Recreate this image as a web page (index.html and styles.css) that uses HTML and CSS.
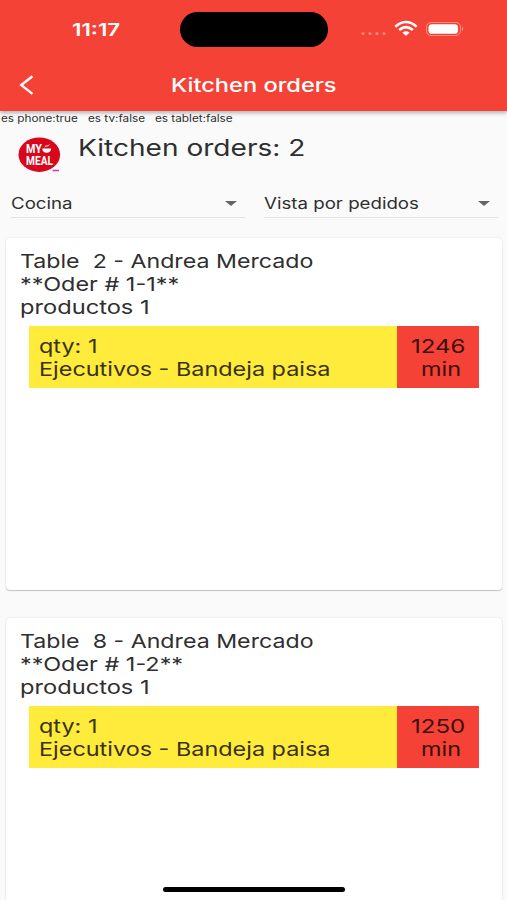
FILE: index.html
```html
<!DOCTYPE html>
<html lang="es">
<head>
<meta charset="utf-8">
<title>Kitchen orders</title>
<link rel="stylesheet" href="styles.css">
</head>
<body>
<header class="top">
  <div class="status">
    <div class="clock"><span class="wide">11:17</span></div>
    <div class="island"></div>
    <svg class="indicators" viewBox="0 0 110 24" width="110" height="24" aria-hidden="true">
      <g fill="#ff8378"><circle cx="3" cy="15.5" r="1.6"/><circle cx="10" cy="15.5" r="1.6"/><circle cx="17" cy="15.5" r="1.6"/><circle cx="24" cy="15.5" r="1.6"/></g>
      <g fill="none" stroke="#fff" stroke-width="2.5"><path d="M35.3 8.7Q46-.6 56.7 8.7"/><path d="M39.1 12Q46 6.2 52.9 12"/></g>
      <path d="M42.4 14.7Q46 11.9 49.6 14.7L46 17.8Z" fill="#fff"/>
      <rect x="66.5" y="4.5" width="34" height="13" rx="4.5" fill="none" stroke="#ff8f85"/>
      <rect x="68.5" y="6.2" width="29.5" height="9.6" rx="3.4" fill="#fff"/>
      <path d="M102 8.8Q104.3 11 102 13.2Z" fill="#ff9d94"/>
    </svg>
  </div>
  <div class="bar">
    <svg class="back" viewBox="0 0 16 22" width="16" height="22" aria-hidden="true"><path d="M13.5 2.3L2.3 11.1L13.5 19.9" fill="none" stroke="#fff" stroke-width="2.4"/></svg>
    <h1 class="title"><span class="wide">Kitchen orders</span></h1>
  </div>
</header>
<main class="page">
  <div class="debug">
    <div class="flag phone"><span class="wide">es phone:true</span></div>
    <div class="flag tv"><span class="wide">es tv:false</span></div>
    <div class="flag"><span class="wide">es tablet:false</span></div>
  </div>
  <div class="heading">
    <svg class="logo" viewBox="0 0 44 36" width="44" height="36" aria-hidden="true">
      <ellipse cx="21.3" cy="17.7" rx="20.8" ry="17.2" fill="#d9071b"/>
      <g fill="#fff" font-family="Roboto, sans-serif" font-weight="700">
        <text x="8" y="16" font-size="12" textLength="16" lengthAdjust="spacingAndGlyphs">MY</text>
        <text x="8" y="27.6" font-size="13.5" textLength="27" lengthAdjust="spacingAndGlyphs">MEAL</text>
      </g>
      <path d="M24.2 11.5H33.2Q32.6 15.8 28.7 15.8Q24.8 15.8 24.2 11.5Z" fill="#fff"/>
      <path d="M26.6 10Q28 8.5 29 9Q30.5 9.3 31.4 7.5" fill="none" stroke="#fff" stroke-width=".9"/>
      <path d="M34.5 33.5H41" stroke="#d43cba" stroke-width="1.6"/>
    </svg>
    <h2 class="count"><span class="wide">Kitchen orders: 2</span></h2>
  </div>
  <div class="filters">
    <div class="select"><span class="wide">Cocina</span><i class="caret"></i></div>
    <div class="select"><span class="wide">Vista por pedidos</span><i class="caret"></i></div>
  </div>
  <section class="orders">
    <article class="card">
      <div><span class="wide customer">Table&nbsp; 2 - Andrea Mercado</span></div>
      <div><span class="wide">**Oder # 1-1**</span></div>
      <div><span class="wide total">productos 1</span></div>
      <div class="item">
        <div class="product">
          <div><span class="wide">qty: 1</span></div>
          <div><span class="wide">Ejecutivos - Bandeja paisa</span></div>
        </div>
        <div class="time">
          <div><span class="wide minutes">1246</span></div>
          <div class="unit"><span class="wide">min</span></div>
        </div>
      </div>
    </article>
    <article class="card">
      <div><span class="wide customer">Table&nbsp; 8 - Andrea Mercado</span></div>
      <div><span class="wide">**Oder # 1-2**</span></div>
      <div><span class="wide total">productos 1</span></div>
      <div class="item">
        <div class="product">
          <div><span class="wide">qty: 1</span></div>
          <div><span class="wide">Ejecutivos - Bandeja paisa</span></div>
        </div>
        <div class="time">
          <div><span class="wide minutes">1250</span></div>
          <div class="unit"><span class="wide">min</span></div>
        </div>
      </div>
    </article>
  </section>
</main>
<div class="home"></div>
</body>
</html>
```
FILE: styles.css
```css
* { box-sizing: border-box; }
body {
  margin: 0;
  height: 900px;
  overflow: hidden;
  display: flex;
  flex-direction: column;
  background: #fafafa;
  color: #2f2f2f;
  font-family: Inter, "Liberation Sans", sans-serif;
}
h1, h2 { margin: 0; font-weight: 400; }

/* Horizontally expanded lettering */
.wide {
  display: inline-block;
  white-space: nowrap;
  transform: scaleX(var(--stretch, 1.232));
  transform-origin: left center;
}

.top {
  flex: none;
  height: 111px;
  background: #f44336;
  color: #fff;
  box-shadow: 0 2px 4px rgba(0, 0, 0, .3);
  z-index: 1;
}
.status { display: flex; height: 59px; align-items: center; }
.clock {
  width: 180px;
  padding-left: 72px;
  font-size: 17.5px;
  font-weight: 600;
  --stretch: 1.27;
}
.island { width: 148px; height: 35px; border-radius: 18px; background: #000; }
.indicators { margin-left: 32px; }
.bar { display: flex; height: 52px; align-items: center; padding-left: 19px; }
.title {
  margin-left: 136px;
  font-size: 18.5px;
  font-weight: 500;
  --stretch: 1.275;
}

.page { flex: 1; min-height: 0; overflow: hidden; }
.debug {
  display: flex;
  height: 13px;
  line-height: 15px;
  padding-left: 1px;
  font-size: 9.8px;
  --stretch: 1.2;
}
.phone { width: 87px; }
.tv { width: 67px; }
.heading { display: flex; height: 53px; padding-left: 18px; }
.logo { margin-top: 13px; }
.count {
  margin: 9px 0 0 15.5px;
  font-size: 23px;
  line-height: 30px;
  --stretch: 1.22;
}
.filters {
  display: grid;
  grid-template-columns: 234px 234px;
  column-gap: 19px;
  padding-left: 11px;
}
.select {
  display: flex;
  justify-content: space-between;
  align-items: center;
  height: 41px;
  padding-right: 8.5px;
  padding-top: 12px;
  border-bottom: 1px solid #e4e4e4;
  font-size: 15.5px;
  --stretch: 1.205;
}
.caret { border: 6px solid transparent; border-top: 5px solid #666; border-bottom: 0; }

.orders { padding: 20px 5px 0 6px; }
.card {
  height: 352px;
  margin-bottom: 28px;
  padding: 12px 23px 0 14px;
  background: #fff;
  border-radius: 4px;
  box-shadow: 0 1px 1px rgba(0, 0, 0, .2), 0 0 2px rgba(0, 0, 0, .13);
  font-size: 19px;
  line-height: 23.2px;
}
.customer { --stretch: 1.22; }
.total { --stretch: 1.245; }
.item {
  display: flex;
  height: 62px;
  margin: 6px 0 0 9px;
}
.product { flex: 1; padding: 9.4px 0 0 10px; background: #ffeb3b; color: #3a3212; }
.time { width: 82.5px; padding: 9.4px 0 0 14px; background: #f44336; color: #3d0d0a; }
.minutes { --stretch: 1.265; }
.unit { padding-left: 10px; }

.home {
  position: fixed;
  left: 163px;
  bottom: 8px;
  width: 182px;
  height: 5px;
  border-radius: 3px;
  background: #000;
}
```
